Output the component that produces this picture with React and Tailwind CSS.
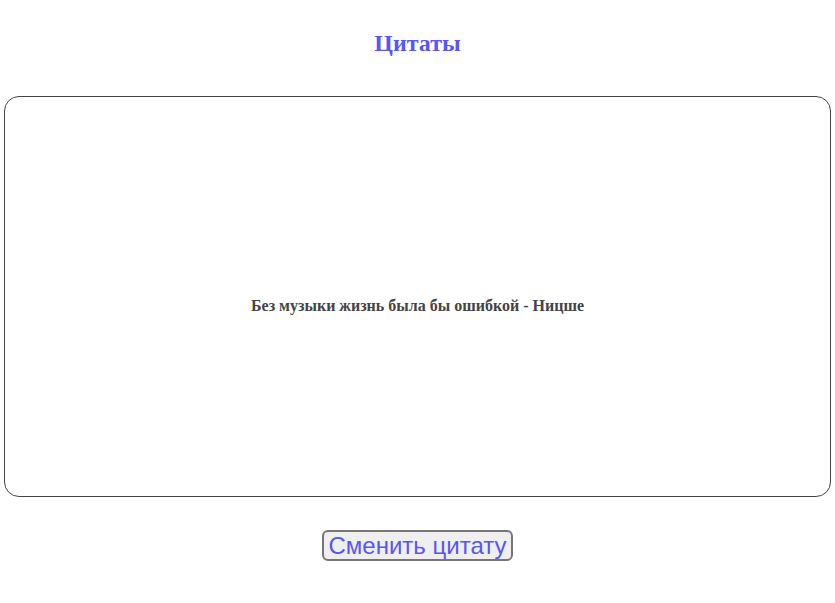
import React, { useState } from 'react';

const quotes = [
  'Без музыки жизнь была бы ошибкой - Ницше',
];

const App = () => {
  const [index, setIndex] = useState(0);

  return (
    <div className="flex flex-col items-center w-full bg-white">
      <h1 className="mt-[29px] text-[24px] leading-[28px] font-bold text-[#5a55f5] font-['Liberation_Serif',serif]">
        Цитаты
      </h1>

      {/* Quote box */}
      <div className="mt-[39px] mx-1 self-stretch h-[401px] pt-[18px] border border-[#444] rounded-[15px] flex items-center justify-center">
        <p className="text-[16px] font-bold text-[#444] font-['Liberation_Serif',serif]">
          {quotes[index]}
        </p>
      </div>

      <button
        onClick={() => setIndex((index + 1) % quotes.length)}
        className="mt-[33px] px-[5px] h-[31px] leading-[26px] text-[24px] text-[#5a55f5] bg-[#efefef] border-2 border-[#767676] rounded-[6px] font-['Liberation_Sans',sans-serif]"
      >
        Сменить цитату
      </button>
    </div>
  );
};

export default App;
